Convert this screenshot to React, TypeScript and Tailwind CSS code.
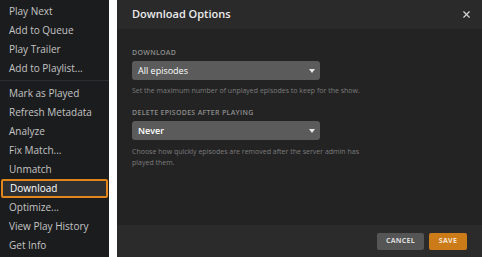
import { X } from "lucide-react";

const menuGroups = [
  ["Play Next", "Add to Queue", "Play Trailer", "Add to Playlist..."],
  [
    "Mark as Played",
    "Refresh Metadata",
    "Analyze",
    "Fix Match...",
    "Unmatch",
    "Download",
    "Optimize...",
    "View Play History",
    "Get Info",
  ],
];

const Caret = () => (
  <svg width="6" height="4" viewBox="0 0 6 4" className="fill-[#e6e6e6]">
    <path d="M0 0h6L3 4z" />
  </svg>
);

const App = () => {
  return (
    <div
      className="flex w-[482px] h-[257px] bg-white overflow-hidden"
      style={{ fontFamily: '"Open Sans", "Noto Sans", sans-serif' }}
    >
      {/* context menu */}
      <div className="w-[109px] h-full bg-[#1b1c1e] pt-[2px]">
        {menuGroups.map((group, gi) => (
          <div key={gi}>
            {gi > 0 && <div className="mt-[2px] mb-[3px] h-px bg-[#2c2d30]" />}
            {group.map((item) =>
              item === "Download" ? (
                <div
                  key={item}
                  className="mx-[1px] h-[19px] flex items-center pl-[7px] border-2 border-[#e0861c] rounded-[2px] bg-[#2e2f31] text-[10px] text-white"
                >
                  {item}
                </div>
              ) : (
                <div key={item} className="h-[19px] flex items-center pl-[9px] text-[10px] text-[#c4c4c4]">
                  {item}
                </div>
              )
            )}
          </div>
        ))}
      </div>

      {/* modal */}
      <div className="ml-[8px] flex-1 h-full bg-[#232323] flex flex-col">
        <div className="h-[29px] bg-[#2a2a2a] flex items-center justify-between pl-[15px] pr-[10px]">
          <span className="text-[11px] font-semibold text-[#ececec]">Download Options</span>
          <X className="w-[11px] h-[11px] text-[#d8d8d8]" strokeWidth={2.5} />
        </div>

        <div className="flex-1 pl-[15px] pt-[19px]">
          <div className="text-[7px] leading-[10px] font-semibold tracking-[0.3px] text-[#8c8c8c] mb-[3px]">DOWNLOAD</div>
          <div className="w-[188px] h-[19px] rounded-[3px] bg-[#5b5b5b] flex items-center justify-between pl-[6px] pr-[5px]">
            <span className="text-[9px] text-white">All episodes</span>
            <Caret />
          </div>
          <div className="mt-[6px] max-w-[234px] text-[7px] leading-[10px] text-[#7c7c7c]">
            Set the maximum number of unplayed episodes to keep for the show.
          </div>

          <div className="mt-[12px] text-[7px] leading-[10px] font-semibold tracking-[0.3px] text-[#8c8c8c] mb-[3px]">
            DELETE EPISODES AFTER PLAYING
          </div>
          <div className="w-[188px] h-[19px] rounded-[3px] bg-[#5b5b5b] flex items-center justify-between pl-[6px] pr-[5px]">
            <span className="text-[9px] font-semibold text-white">Never</span>
            <Caret />
          </div>
          <div className="mt-[6px] max-w-[234px] text-[7px] leading-[11px] text-[#7c7c7c]">
            Choose how quickly episodes are removed after the server admin has played them.
          </div>
        </div>

        <div className="h-[32px] bg-[#2b2b2b] flex items-center justify-end gap-[5px] pr-[15px]">
          <div className="w-[47px] h-[17px] rounded-[2px] bg-[#555555] flex items-center justify-center text-[7px] font-bold text-[#dcdcdc] tracking-[0.3px]">
            CANCEL
          </div>
          <div className="w-[38px] h-[17px] rounded-[2px] bg-[#cc7b19] flex items-center justify-center text-[7px] font-bold text-[#f4e6d4] tracking-[0.3px]">
            SAVE
          </div>
        </div>
      </div>
    </div>
  );
};

export default App;
